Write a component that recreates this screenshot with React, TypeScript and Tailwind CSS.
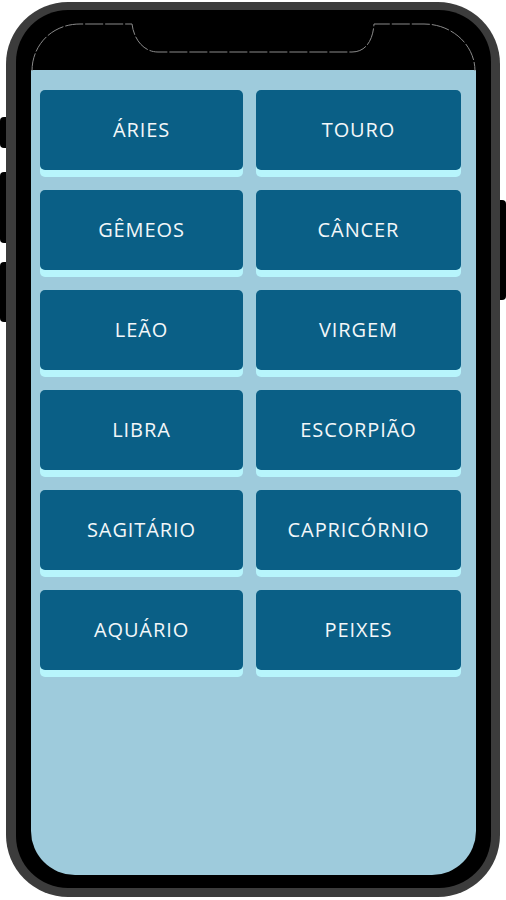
const signs = [
  "ÁRIES",
  "TOURO",
  "GÊMEOS",
  "CÂNCER",
  "LEÃO",
  "VIRGEM",
  "LIBRA",
  "ESCORPIÃO",
  "SAGITÁRIO",
  "CAPRICÓRNIO",
  "AQUÁRIO",
  "PEIXES",
];

export default function App() {
  return (
    <div className="flex h-[900px] w-[506px] bg-white pt-[2px]">
      {/* left side keys */}
      <div className="flex w-[6px] flex-col pt-[115px]">
        <div className="h-[31px] rounded-l-sm bg-black" />
        <div className="mt-[24px] h-[71px] rounded-l-sm bg-black" />
        <div className="mt-[19px] h-[60px] rounded-l-sm bg-black" />
      </div>

      <div className="h-[895px] w-[494px] rounded-[62px] bg-[#3c3c3c] pb-[9px] pl-[10px] pr-[9px] pt-[8px]">
        <div className="relative h-full w-full rounded-[52px] bg-black pb-[13px] pl-[15px] pr-[15px] pt-[60px]">
          <svg
            className="absolute left-0 top-0"
            width="475"
            height="62"
            viewBox="0 0 475 62"
            fill="none"
          >
            <path
              d="M16 61 C16 35 36 14 64 14 L116 14 C118 30 128 42 142 42 L336 42 C350 42 357 30 358 14 L408 14 C436 14 459 35 459 61"
              stroke="#8a8a8a"
              strokeWidth="1"
              strokeDasharray="18 2"
            />
          </svg>
          <div className="h-full w-full rounded-b-[44px] bg-[#9ecbdc] pl-[9px] pr-[15px] pt-[20px]">
            <div className="grid grid-cols-[203px_205px] gap-x-[13px] gap-y-[20px]">
              {signs.map((s) => (
                <button
                  key={s}
                  className="flex h-[80px] items-center justify-center rounded-[5px] bg-[#0a5f86] font-['Open_Sans',sans-serif] text-[20px] font-medium tracking-[0.9px] text-[#f3f7f9] shadow-[0_7px_0_#b7f5fc]"
                >
                  {s}
                </button>
              ))}
            </div>
          </div>
        </div>
      </div>

      {/* right side key */}
      <div className="w-[6px] pt-[198px]">
        <div className="h-[100px] rounded-r-sm bg-black" />
      </div>
    </div>
  );
}
